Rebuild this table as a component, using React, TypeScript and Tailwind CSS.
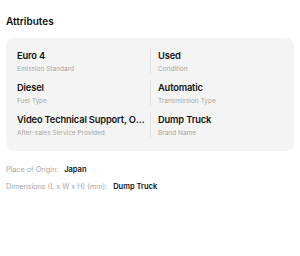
const attributes = [
  { value: "Euro 4", label: "Emission Standard" },
  { value: "Used", label: "Condition" },
  { value: "Diesel", label: "Fuel Type" },
  { value: "Automatic", label: "Transmission Type" },
  { value: "Video Technical Support, Online Support", label: "After-sales Service Provided" },
  { value: "Dump Truck", label: "Brand Name" },
];

const details = [
  { label: "Place of Origin:", value: "Japan" },
  { label: "Dimensions (L x W x H) (mm):", value: "Dump Truck" },
];

export default function App() {
  return (
    <div className="h-[256px] w-[300px] bg-white px-[6px] pt-[14px] font-['Inter',sans-serif] text-[#111]">
      <h2 className="text-[10px] font-semibold leading-[14px]">Attributes</h2>

      <div className="mt-[10px] grid grid-cols-2 gap-y-[7px] rounded-[8px] bg-[#f4f4f4] px-[11px] pb-[13px] pt-[11px]">
        {attributes.map((item, i) => (
          <div
            key={item.label}
            className={i % 2 === 1 ? "border-l border-[#e2e2e2] pl-[7px]" : "pr-[5px]"}
          >
            <div className="truncate text-[9.3px] font-semibold leading-[13px] tracking-[-0.15px]">
              {item.value}
            </div>
            <div className="mt-[3px] truncate text-[6.5px] leading-[9px] text-[#a6a6a6]">
              {item.label}
            </div>
          </div>
        ))}
      </div>

      <div className="mt-[14px] flex flex-col gap-[7px]">
        {details.map((d) => (
          <div key={d.label} className="flex items-center gap-[6px] leading-[10px]">
            <span className="text-[7.2px] text-[#a6a6a6]">{d.label}</span>
            <span className="text-[7.5px] font-semibold">{d.value}</span>
          </div>
        ))}
      </div>
    </div>
  );
}
